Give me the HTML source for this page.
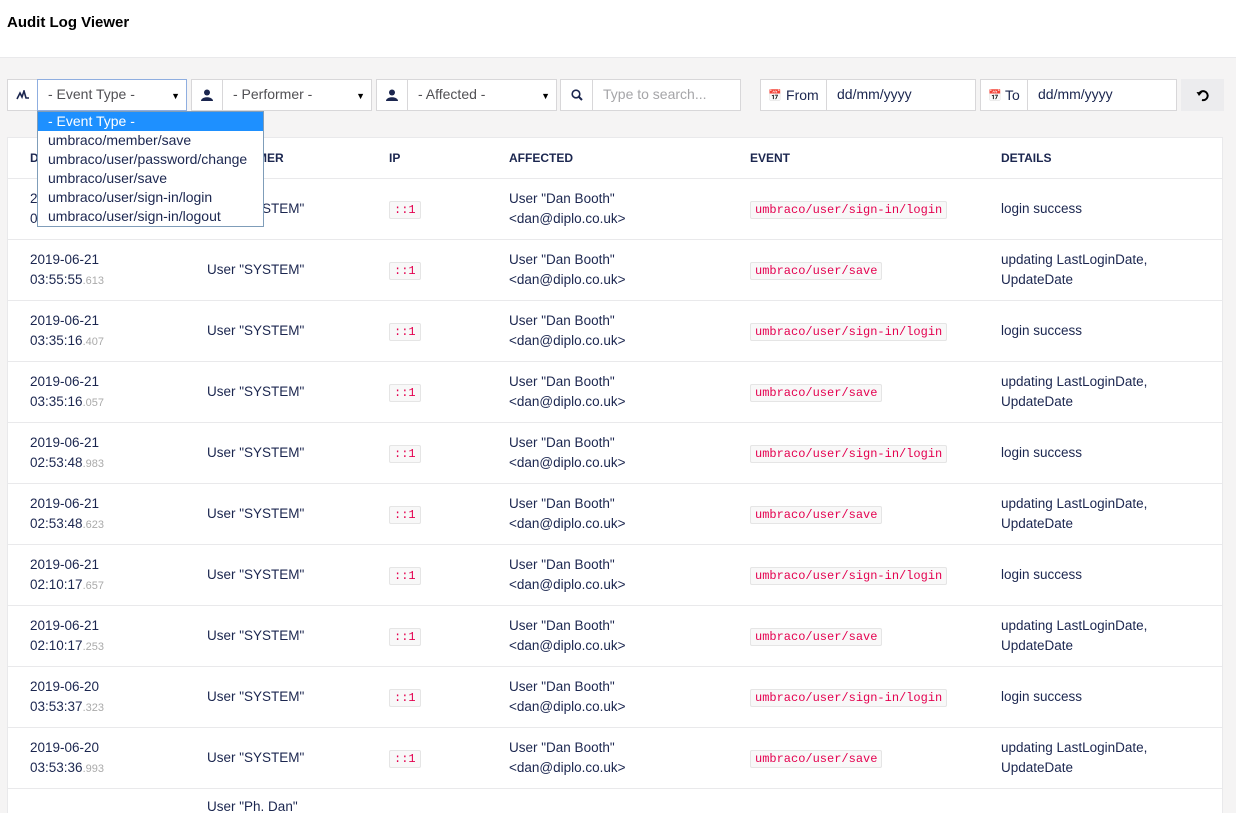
<!DOCTYPE html>
<html><head><meta charset="utf-8"><style>
*{box-sizing:border-box;margin:0;padding:0}
html{width:1236px;height:813px;overflow:hidden}
body{width:1236px;height:813px;overflow:hidden;background:#f5f4f4;font-family:"Liberation Sans",sans-serif;font-size:13.5px;color:#1b264f;position:relative}
.hdr{position:absolute;left:0;top:0;width:1236px;height:58px;background:#fff;border-bottom:1px solid #e9e9eb}
.hdr h1{position:absolute;left:7px;top:14px;font-size:15px;font-weight:bold;color:#000}
.box{position:absolute;top:79px;height:32px;background:#fff;border:1px solid #d8d7d9}
.ic{position:absolute;top:79px;height:32px;background:#fff;border:1px solid #d8d7d9;display:flex;align-items:center;justify-content:center;color:#1b264f}
.sel{font-size:14px;color:#515054;padding:6px 10px}
.arr{position:absolute;right:6px;top:11px;font-size:9px;color:#000}
.tbl{position:absolute;left:7px;top:137px;width:1216px;height:690px;background:#fff;border:1px solid #e9e9eb}
.th{position:absolute;top:151px;font-size:12px;font-weight:bold;color:#1b264f}
.row{position:absolute;left:8px;width:1214px;height:61px;border-top:1px solid #e9e9eb}
.row div{position:absolute;line-height:20px;color:#1b264f}
.ms{color:#aaa;font-size:11px}
code{font-family:"Liberation Mono",monospace;font-size:12px;color:#e4004f;background:#f8f8f8;border:1px solid #e5e5e5;border-radius:2px;padding:1px 4px}
.dd{position:absolute;left:37px;top:111px;width:227px;height:116px;background:#fff;border:1px solid #7f9db9;font-size:14px;color:#1b264f}
.dd div{height:19px;line-height:19px;padding-left:10px;white-space:nowrap}
</style></head><body>
<div class="hdr"><h1>Audit Log Viewer</h1></div>

<div class="ic" style="left:7px;width:31px"><svg width="14" height="10" viewBox="0 0 14 10"><path d="M1 9 L4 3 L6 7 L8 1 L10 8 L13 8" fill="none" stroke="#1b264f" stroke-width="1.6"/></svg></div>
<div class="box sel" style="left:37px;width:150px;border-color:#8faee0">- Event Type -<span class="arr">▼</span></div>
<div class="ic" style="left:191px;width:32px"><svg width="12" height="12" viewBox="0 0 12 12"><circle cx="6" cy="3.5" r="3" fill="#1b264f"/><path d="M0 12 C0 7 12 7 12 12Z" fill="#1b264f"/></svg></div>
<div class="box sel" style="left:222px;width:150px">- Performer -<span class="arr">▼</span></div>
<div class="ic" style="left:376px;width:32px"><svg width="12" height="12" viewBox="0 0 12 12"><circle cx="6" cy="3.5" r="3" fill="#1b264f"/><path d="M0 12 C0 7 12 7 12 12Z" fill="#1b264f"/></svg></div>
<div class="box sel" style="left:407px;width:150px">- Affected -<span class="arr">▼</span></div>
<div class="ic" style="left:560px;width:33px"><svg width="12" height="12" viewBox="0 0 12 12"><circle cx="5" cy="5" r="3.8" fill="none" stroke="#1b264f" stroke-width="1.6"/><path d="M8 8 L11 11" stroke="#1b264f" stroke-width="2"/></svg></div>
<div class="box sel" style="left:592px;width:149px;color:#a5a5a8">Type to search...</div>
<div class="ic" style="left:760px;width:67px;font-size:14px;color:#1b264f"><span style="font-size:11px;margin-right:4px">📅</span>From</div>
<div class="box sel" style="left:826px;width:150px;color:#1b264f">dd/mm/yyyy</div>
<div class="ic" style="left:980px;width:48px;font-size:14px"><span style="font-size:11px;margin-right:3px">📅</span>To</div>
<div class="box sel" style="left:1027px;width:150px;color:#1b264f">dd/mm/yyyy</div>
<div class="ic" style="left:1181px;width:43px;background:#ececee;border-color:#ececee"><svg width="14" height="14" viewBox="0 0 14 14"><path d="M3 6 A4.5 4.5 0 1 1 6 12" fill="none" stroke="#000" stroke-width="2"/><path d="M0.5 4 L3 8 L6 4.5Z" fill="#000"/></svg></div>

<div class="tbl"></div>
<div class="th" style="left:30px">DATE</div>
<div class="th" style="left:207px">PERFORMER</div>
<div class="th" style="left:389px">IP</div>
<div class="th" style="left:509px">AFFECTED</div>
<div class="th" style="left:750px">EVENT</div>
<div class="th" style="left:1001px">DETAILS</div>

<div class="row" style="top:178px"><div style="left:22px;top:10px">2019-06-21<br>03:56:01<span class="ms">.213</span></div><div style="left:199px;top:20px">User "SYSTEM"</div><div style="left:381px;top:20px"><code>::1</code></div><div style="left:501px;top:10px">User "Dan Booth"<br>&lt;dan@diplo.co.uk&gt;</div><div style="left:742px;top:20px"><code>umbraco/user/sign-in/login</code></div><div style="left:993px;top:20px">login success</div></div>
<div class="row" style="top:239px"><div style="left:22px;top:10px">2019-06-21<br>03:55:55<span class="ms">.613</span></div><div style="left:199px;top:20px">User "SYSTEM"</div><div style="left:381px;top:20px"><code>::1</code></div><div style="left:501px;top:10px">User "Dan Booth"<br>&lt;dan@diplo.co.uk&gt;</div><div style="left:742px;top:20px"><code>umbraco/user/save</code></div><div style="left:993px;top:10px">updating LastLoginDate,<br>UpdateDate</div></div>
<div class="row" style="top:300px"><div style="left:22px;top:10px">2019-06-21<br>03:35:16<span class="ms">.407</span></div><div style="left:199px;top:20px">User "SYSTEM"</div><div style="left:381px;top:20px"><code>::1</code></div><div style="left:501px;top:10px">User "Dan Booth"<br>&lt;dan@diplo.co.uk&gt;</div><div style="left:742px;top:20px"><code>umbraco/user/sign-in/login</code></div><div style="left:993px;top:20px">login success</div></div>
<div class="row" style="top:361px"><div style="left:22px;top:10px">2019-06-21<br>03:35:16<span class="ms">.057</span></div><div style="left:199px;top:20px">User "SYSTEM"</div><div style="left:381px;top:20px"><code>::1</code></div><div style="left:501px;top:10px">User "Dan Booth"<br>&lt;dan@diplo.co.uk&gt;</div><div style="left:742px;top:20px"><code>umbraco/user/save</code></div><div style="left:993px;top:10px">updating LastLoginDate,<br>UpdateDate</div></div>
<div class="row" style="top:422px"><div style="left:22px;top:10px">2019-06-21<br>02:53:48<span class="ms">.983</span></div><div style="left:199px;top:20px">User "SYSTEM"</div><div style="left:381px;top:20px"><code>::1</code></div><div style="left:501px;top:10px">User "Dan Booth"<br>&lt;dan@diplo.co.uk&gt;</div><div style="left:742px;top:20px"><code>umbraco/user/sign-in/login</code></div><div style="left:993px;top:20px">login success</div></div>
<div class="row" style="top:483px"><div style="left:22px;top:10px">2019-06-21<br>02:53:48<span class="ms">.623</span></div><div style="left:199px;top:20px">User "SYSTEM"</div><div style="left:381px;top:20px"><code>::1</code></div><div style="left:501px;top:10px">User "Dan Booth"<br>&lt;dan@diplo.co.uk&gt;</div><div style="left:742px;top:20px"><code>umbraco/user/save</code></div><div style="left:993px;top:10px">updating LastLoginDate,<br>UpdateDate</div></div>
<div class="row" style="top:544px"><div style="left:22px;top:10px">2019-06-21<br>02:10:17<span class="ms">.657</span></div><div style="left:199px;top:20px">User "SYSTEM"</div><div style="left:381px;top:20px"><code>::1</code></div><div style="left:501px;top:10px">User "Dan Booth"<br>&lt;dan@diplo.co.uk&gt;</div><div style="left:742px;top:20px"><code>umbraco/user/sign-in/login</code></div><div style="left:993px;top:20px">login success</div></div>
<div class="row" style="top:605px"><div style="left:22px;top:10px">2019-06-21<br>02:10:17<span class="ms">.253</span></div><div style="left:199px;top:20px">User "SYSTEM"</div><div style="left:381px;top:20px"><code>::1</code></div><div style="left:501px;top:10px">User "Dan Booth"<br>&lt;dan@diplo.co.uk&gt;</div><div style="left:742px;top:20px"><code>umbraco/user/save</code></div><div style="left:993px;top:10px">updating LastLoginDate,<br>UpdateDate</div></div>
<div class="row" style="top:666px"><div style="left:22px;top:10px">2019-06-20<br>03:53:37<span class="ms">.323</span></div><div style="left:199px;top:20px">User "SYSTEM"</div><div style="left:381px;top:20px"><code>::1</code></div><div style="left:501px;top:10px">User "Dan Booth"<br>&lt;dan@diplo.co.uk&gt;</div><div style="left:742px;top:20px"><code>umbraco/user/sign-in/login</code></div><div style="left:993px;top:20px">login success</div></div>
<div class="row" style="top:727px"><div style="left:22px;top:10px">2019-06-20<br>03:53:36<span class="ms">.993</span></div><div style="left:199px;top:20px">User "SYSTEM"</div><div style="left:381px;top:20px"><code>::1</code></div><div style="left:501px;top:10px">User "Dan Booth"<br>&lt;dan@diplo.co.uk&gt;</div><div style="left:742px;top:20px"><code>umbraco/user/save</code></div><div style="left:993px;top:10px">updating LastLoginDate,<br>UpdateDate</div></div>
<div class="row" style="top:788px"><div style="left:199px;top:8px">User "Ph. Dan"</div></div>

<div class="dd">
<div style="background:#1e90ff;color:#fff">- Event Type -</div>
<div>umbraco/member/save</div>
<div>umbraco/user/password/change</div>
<div>umbraco/user/save</div>
<div>umbraco/user/sign-in/login</div>
<div>umbraco/user/sign-in/logout</div>
</div>
</body></html>
